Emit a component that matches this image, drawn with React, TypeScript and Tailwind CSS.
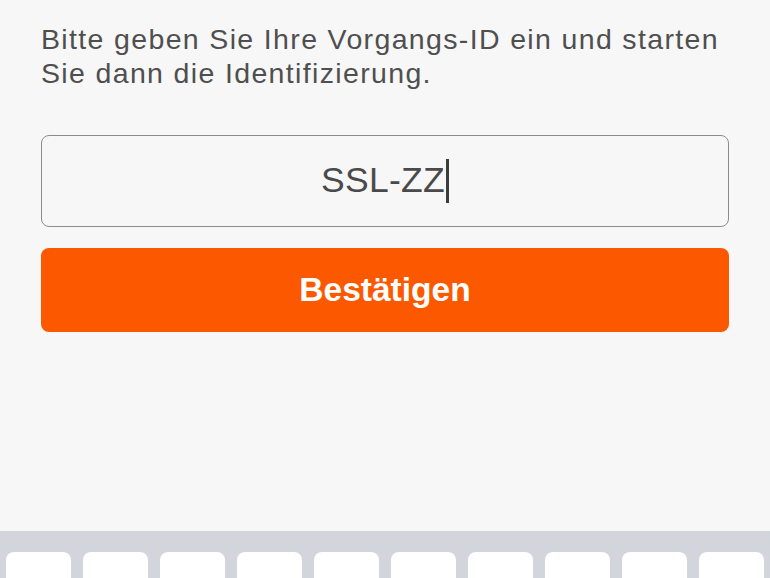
import React from "react";

const keys = ["Q", "W", "E", "R", "T", "Z", "U", "I", "O", "P"];

export default function App() {
  return (
    <div
      className="h-[578px] w-[770px] overflow-hidden bg-[#f7f7f7] flex flex-col"
      style={{ fontFamily: '"Liberation Sans", Arial, sans-serif' }}
    >
      <div className="flex-1 px-[41px] pt-[21.6px]">
        <p className="text-[28.5px] leading-[34.5px] text-[#4f4f4f] tracking-[1.35px] whitespace-nowrap">
          Bitte geben Sie Ihre Vorgangs-ID ein und starten
          <br />
          Sie dann die Identifizierung.
        </p>

        <div className="mt-[44.4px] h-[92px] rounded-[8px] border border-[#8c8c8c] flex items-center justify-center">
          <span className="text-[35.5px] text-[#4a4a4a] tracking-[0.3px]">SSL-ZZ</span>
          <span className="ml-[1px] h-[44px] w-[3px] bg-[#3c3c3c]" />
        </div>

        <button className="mt-[21px] h-[84px] w-full rounded-[8px] bg-[#fc5800] text-white text-[33.5px] font-bold">
          Bestätigen
        </button>
      </div>

      <div className="h-[47px] bg-[#d2d5db] pt-[21px] px-[6px] flex gap-[12px]">
        {keys.map((k) => (
          <div
            key={k}
            className="w-[65px] h-[86px] shrink-0 rounded-[8px] bg-white flex justify-center"
          >
            <span className="text-[46px] leading-none text-[#1f1f1f] mt-[19.3px]">{k}</span>
          </div>
        ))}
      </div>
    </div>
  );
}
